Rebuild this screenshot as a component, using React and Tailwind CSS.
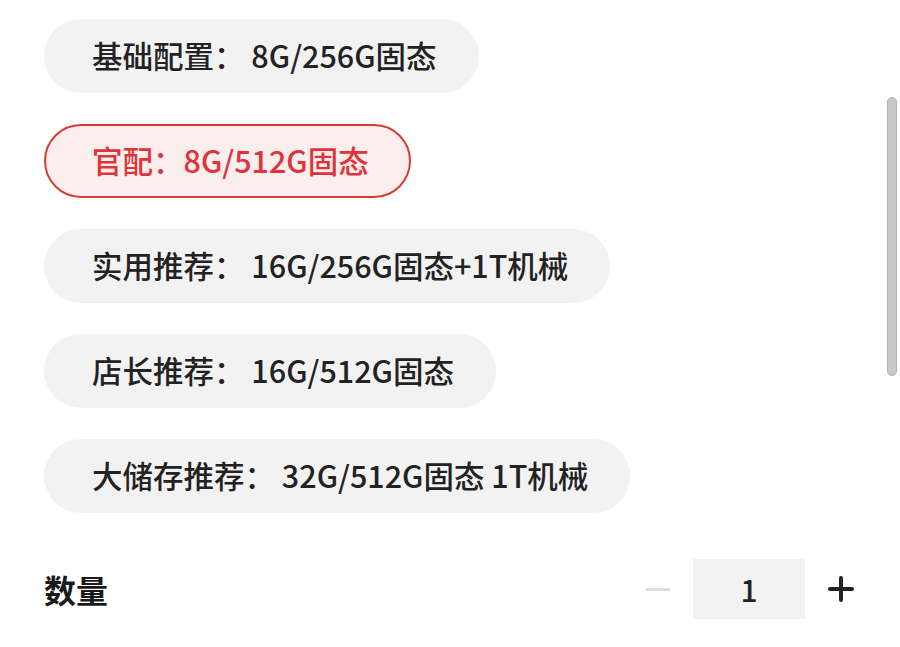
import React from "react";

const options = [
  { label: "基础配置： 8G/256G固态", selected: false },
  { label: "官配：8G/512G固态", selected: true },
  { label: "实用推荐： 16G/256G固态+1T机械", selected: false },
  { label: "店长推荐： 16G/512G固态", selected: false },
  { label: "大储存推荐： 32G/512G固态 1T机械", selected: false },
];

export default function App() {
  return (
    <div
      className="relative w-[900px] h-[647px] bg-white overflow-hidden"
      style={{ fontFamily: '"Noto Sans CJK SC", "Noto Sans", sans-serif' }}
    >
      <div className="pl-[44px] pr-[46px] pt-[19px]">
        <div className="flex flex-col items-start gap-[31px]">
          {options.map((o) =>
            o.selected ? (
              <div
                key={o.label}
                className="h-[74px] flex items-center pl-[46px] pr-[40px] rounded-full border-2 border-[#d63d31] bg-[#fdeeee] text-[#e0343b] text-[30.5px] font-medium whitespace-pre"
              >
                {o.label}
              </div>
            ) : (
              <div
                key={o.label}
                className="h-[74px] flex items-center pl-[48px] pr-[42px] rounded-full bg-[#f2f2f2] text-[#222222] text-[30.5px] font-medium whitespace-pre"
              >
                {o.label}
              </div>
            )
          )}
        </div>
        <div className="mt-[46px] flex items-center justify-between">
          <div className="text-[32px] font-bold text-[#1a1a1a]">数量</div>
          <div className="flex items-center">
            <div className="w-[24px] h-[3px] bg-[#dedede]" />
            <div className="ml-[23px] w-[112px] h-[60px] bg-[#f2f2f2] flex items-center justify-center text-[30px] font-medium text-[#222222]">
              1
            </div>
            <div className="ml-[23px] relative w-[26px] h-[26px]">
              <div className="absolute left-0 top-[11px] w-[26px] h-[4px] bg-[#222222] rounded-sm" />
              <div className="absolute top-0 left-[11px] h-[26px] w-[4px] bg-[#222222] rounded-sm" />
            </div>
          </div>
        </div>
      </div>
      <div className="absolute left-[887px] top-[97px] w-[10px] h-[279px] rounded-full bg-[#c9c9c9] border border-[#b0b0b0]" />
    </div>
  );
}
